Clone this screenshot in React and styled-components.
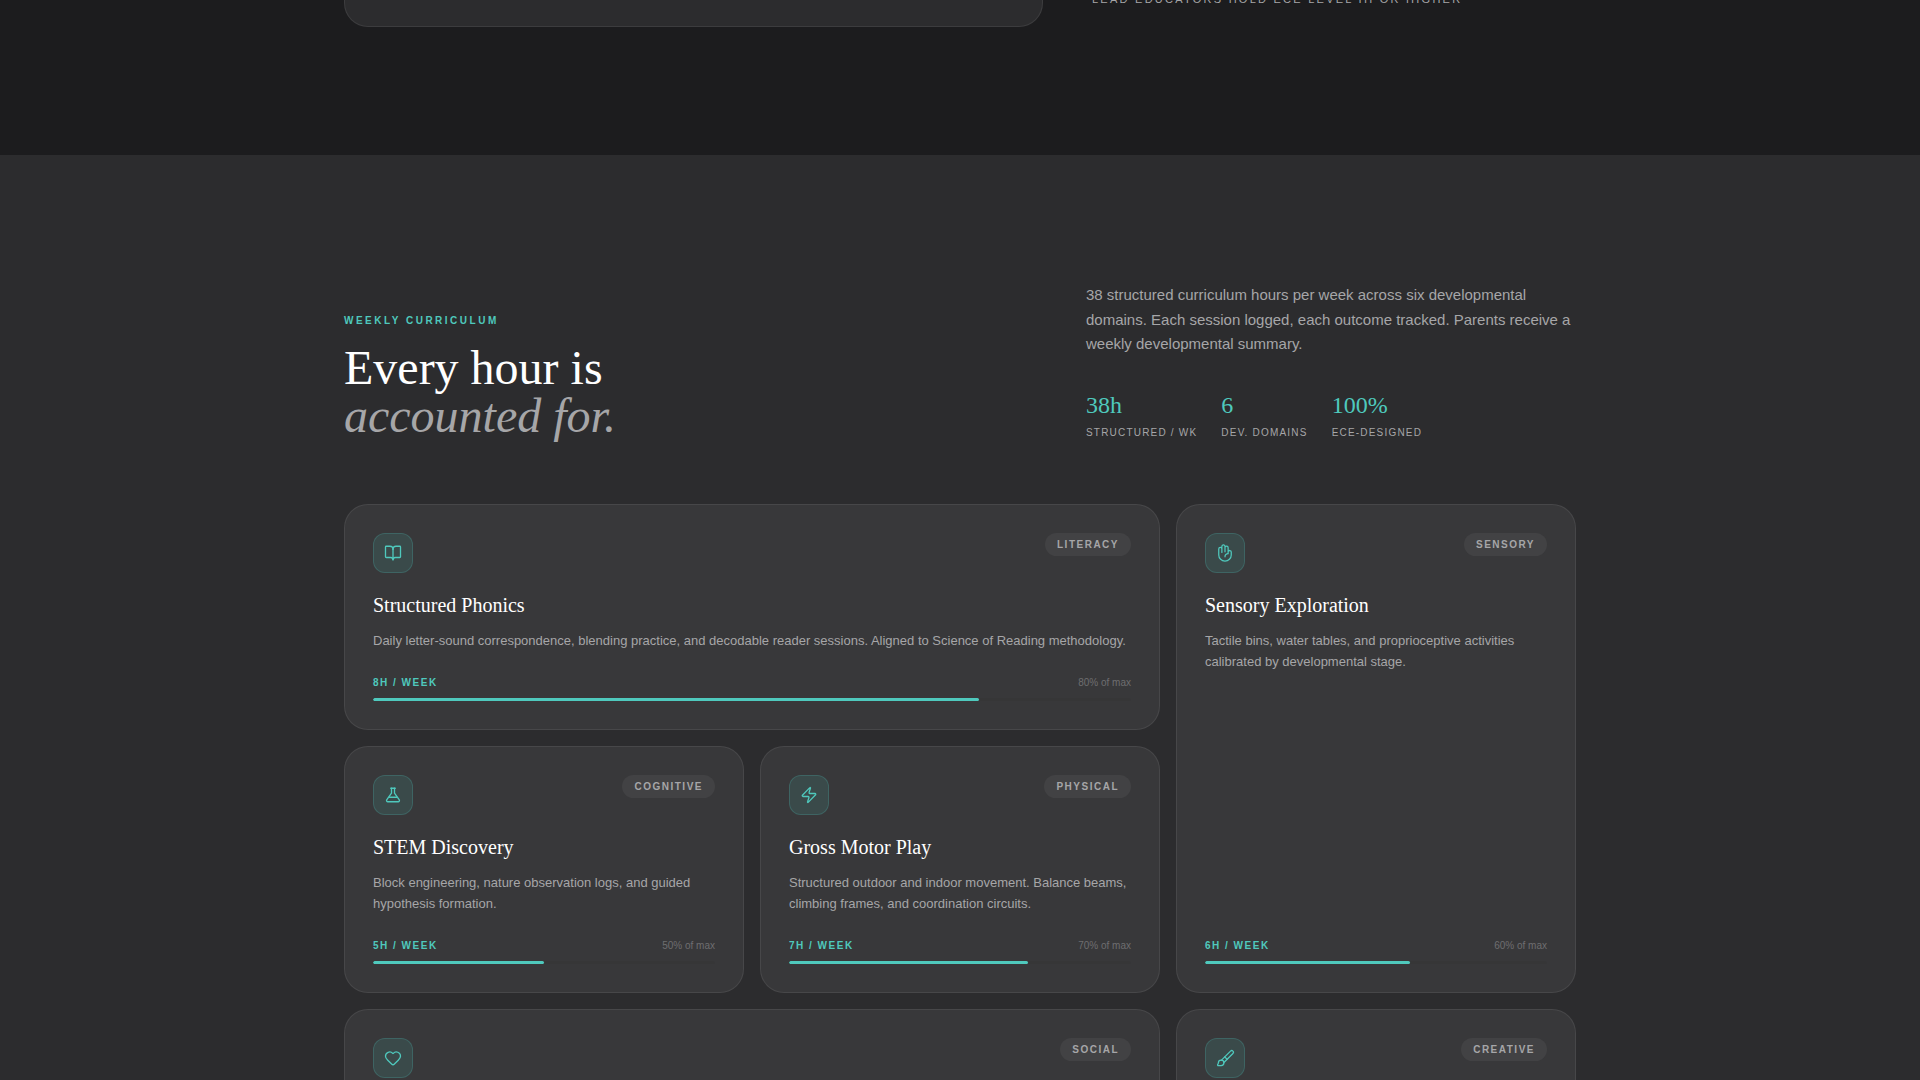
import React from "react";
import styled, { createGlobalStyle } from "styled-components";
import { BookOpen, Zap, Heart, Brush } from "lucide-react";
import { PiHandPalm } from "react-icons/pi";

const SERIF = `"Liberation Serif", "Times New Roman", serif`;
const SANS = `"Liberation Sans", Arial, sans-serif`;
const TEAL = "#4fc9bd";
const MUTED = "#a6a6a8";

const Flask = () => (
  <svg
    width="18"
    height="18"
    viewBox="0 0 24 24"
    fill="none"
    stroke="currentColor"
    strokeWidth="1.75"
    strokeLinecap="round"
    strokeLinejoin="round"
  >
    <path d="M9 3h6" />
    <path d="M10 3v6.5L3.6 18.6A1.6 1.6 0 0 0 5 21h14a1.6 1.6 0 0 0 1.4-2.4L14 9.5V3" />
    <path d="M7 15h10" />
  </svg>
);

const cards = [
  {
    icon: <BookOpen size={18} strokeWidth={1.75} />,
    tag: "LITERACY",
    title: "Structured Phonics",
    text: "Daily letter-sound correspondence, blending practice, and decodable reader sessions. Aligned to Science of Reading methodology.",
    hours: "8H / WEEK",
    pct: 80,
    wide: true,
  },
  {
    icon: <PiHandPalm size={20} />,
    tag: "SENSORY",
    title: "Sensory Exploration",
    text: "Tactile bins, water tables, and proprioceptive activities calibrated by developmental stage.",
    hours: "6H / WEEK",
    pct: 60,
    tall: true,
  },
  {
    icon: <Flask />,
    tag: "COGNITIVE",
    title: "STEM Discovery",
    text: "Block engineering, nature observation logs, and guided hypothesis formation.",
    hours: "5H / WEEK",
    pct: 50,
  },
  {
    icon: <Zap size={18} strokeWidth={1.75} />,
    tag: "PHYSICAL",
    title: "Gross Motor Play",
    text: "Structured outdoor and indoor movement. Balance beams, climbing frames, and coordination circuits.",
    hours: "7H / WEEK",
    pct: 70,
  },
  { icon: <Heart size={18} strokeWidth={1.75} />, tag: "SOCIAL", wide: true },
  { icon: <Brush size={19} strokeWidth={1.6} />, tag: "CREATIVE" },
];

const stats = [
  { value: "38h", label: "STRUCTURED / WK" },
  { value: "6", label: "DEV. DOMAINS" },
  { value: "100%", label: "ECE-DESIGNED" },
];

const App = () => {
  return (
    <Page>
      <GlobalStyle />
      <TopBand>
        <TopInner>
          <TopCard />
          <TopNote>LEAD EDUCATORS HOLD ECE LEVEL III OR HIGHER</TopNote>
        </TopInner>
      </TopBand>

      <Curriculum>
        <Container>
          <Header>
            <div>
              <Eyebrow>WEEKLY CURRICULUM</Eyebrow>
              <Heading>
                Every hour is
                <br />
                <em>accounted for.</em>
              </Heading>
            </div>
            <Intro>
              <Lead>
                38 structured curriculum hours per week across six developmental
                domains. Each session logged, each outcome tracked. Parents
                receive a weekly developmental summary.
              </Lead>
              <Stats>
                {stats.map((s) => (
                  <div key={s.label}>
                    <StatValue>{s.value}</StatValue>
                    <StatLabel>{s.label}</StatLabel>
                  </div>
                ))}
              </Stats>
            </Intro>
          </Header>

          <CardGrid>
            {cards.map((c) => (
              <Card key={c.tag} $wide={c.wide} $tall={c.tall}>
                <CardTop>
                  <IconBox>{c.icon}</IconBox>
                  <Tag>{c.tag}</Tag>
                </CardTop>
                {c.title && <CardTitle>{c.title}</CardTitle>}
                {c.text && <CardText>{c.text}</CardText>}
                {c.hours && (
                  <Meter>
                    <MeterRow>
                      <Hours>{c.hours}</Hours>
                      <Percent>{c.pct}% of max</Percent>
                    </MeterRow>
                    <Track>
                      <Fill style={{ width: `${c.pct}%` }} />
                    </Track>
                  </Meter>
                )}
              </Card>
            ))}
          </CardGrid>
        </Container>
      </Curriculum>
    </Page>
  );
};

export default App;

const GlobalStyle = createGlobalStyle`
  html, body {
    margin: 0;
    padding: 0;
    background: #2c2c2e;
  }
  * {
    box-sizing: border-box;
  }
`;

const Page = styled.div`
  height: 1080px;
  overflow: hidden;
  font-family: ${SANS};
`;

const TopBand = styled.section`
  height: 155px;
  overflow: hidden;
  background: #1c1c1e;
`;

const TopInner = styled.div`
  width: 1232px;
  margin: 0 auto;
  display: grid;
  grid-template-columns: 699px 1fr;
  column-gap: 49px;
  align-items: start;
`;

const TopCard = styled.div`
  height: 27px;
  background: #2c2c2e;
  border: 1px solid rgba(255, 255, 255, 0.08);
  border-top: none;
  border-radius: 0 0 24px 24px;
`;

const TopNote = styled.div`
  margin-top: -7px;
  font-size: 11px;
  line-height: 13px;
  letter-spacing: 2.25px;
  color: ${MUTED};
  white-space: nowrap;
`;

const Curriculum = styled.section`
  background: #2c2c2e;
  padding-top: 128px;
`;

const Container = styled.div`
  width: 1232px;
  margin: 0 auto;
`;

const Header = styled.header`
  display: grid;
  grid-template-columns: 1fr 490px;
  align-items: end;
  margin-bottom: 64.5px;
`;

const Eyebrow = styled.div`
  font-size: 10px;
  line-height: 12px;
  font-weight: 700;
  letter-spacing: 2.5px;
  color: ${TEAL};
  margin-bottom: 17px;
`;

const Heading = styled.h2`
  margin: 0;
  font-family: ${SERIF};
  font-size: 48px;
  line-height: 48px;
  font-weight: 400;
  color: #ffffff;

  em {
    color: ${MUTED};
    font-style: italic;
  }
`;

const Intro = styled.div`
  display: flex;
  flex-direction: column;
  gap: 32px;
`;

const Lead = styled.p`
  margin: 0;
  font-size: 15px;
  line-height: 24.5px;
  color: ${MUTED};
`;

const Stats = styled.div`
  display: flex;
  gap: 24px;
`;

const StatValue = styled.div`
  font-family: ${SERIF};
  font-size: 24px;
  line-height: 32px;
  color: ${TEAL};
`;

const StatLabel = styled.div`
  margin-top: 5px;
  font-size: 10px;
  line-height: 14px;
  letter-spacing: 0.12em;
  color: ${MUTED};
`;

const CardGrid = styled.div`
  display: grid;
  grid-template-columns: repeat(3, 1fr);
  gap: 16px;
`;

const Card = styled.article`
  grid-column: ${(p) => (p.$wide ? "span 2" : "auto")};
  grid-row: ${(p) => (p.$tall ? "span 2" : "auto")};
  display: flex;
  flex-direction: column;
  min-height: 160px;
  padding: 28px;
  background: #38383a;
  border: 1px solid rgba(255, 255, 255, 0.08);
  border-radius: 24px;
`;

const CardTop = styled.div`
  display: flex;
  justify-content: space-between;
  align-items: flex-start;
  margin-bottom: 19px;
`;

const IconBox = styled.div`
  width: 40px;
  height: 40px;
  display: flex;
  align-items: center;
  justify-content: center;
  color: ${TEAL};
  background: rgba(78, 205, 196, 0.12);
  border: 1px solid rgba(78, 205, 196, 0.2);
  border-radius: 12px;
`;

const Tag = styled.span`
  padding: 5px 12px;
  font-size: 10px;
  line-height: 13px;
  font-weight: 700;
  letter-spacing: 1.5px;
  color: ${MUTED};
  background: #424244;
  border-radius: 999px;
`;

const CardTitle = styled.h3`
  margin: 0 0 12px;
  font-family: ${SERIF};
  font-size: 20px;
  line-height: 26px;
  font-weight: 400;
  color: #ffffff;
`;

const CardText = styled.p`
  margin: 0;
  font-size: 13px;
  line-height: 21px;
  color: ${MUTED};
`;

const Meter = styled.div`
  margin-top: auto;
  padding-top: 25px;
`;

const MeterRow = styled.div`
  display: flex;
  justify-content: space-between;
  align-items: center;
  margin-bottom: 8px;
`;

const Hours = styled.span`
  font-size: 10px;
  line-height: 14px;
  font-weight: 700;
  letter-spacing: 1.5px;
  color: ${TEAL};
`;

const Percent = styled.span`
  font-size: 10px;
  line-height: 14px;
  color: #6e6e70;
`;

const Track = styled.div`
  height: 3px;
  background: rgba(0, 0, 0, 0.035);
  border-radius: 2px;
  overflow: hidden;
`;

const Fill = styled.div`
  height: 100%;
  background: ${TEAL};
  border-radius: 2px;
`;
